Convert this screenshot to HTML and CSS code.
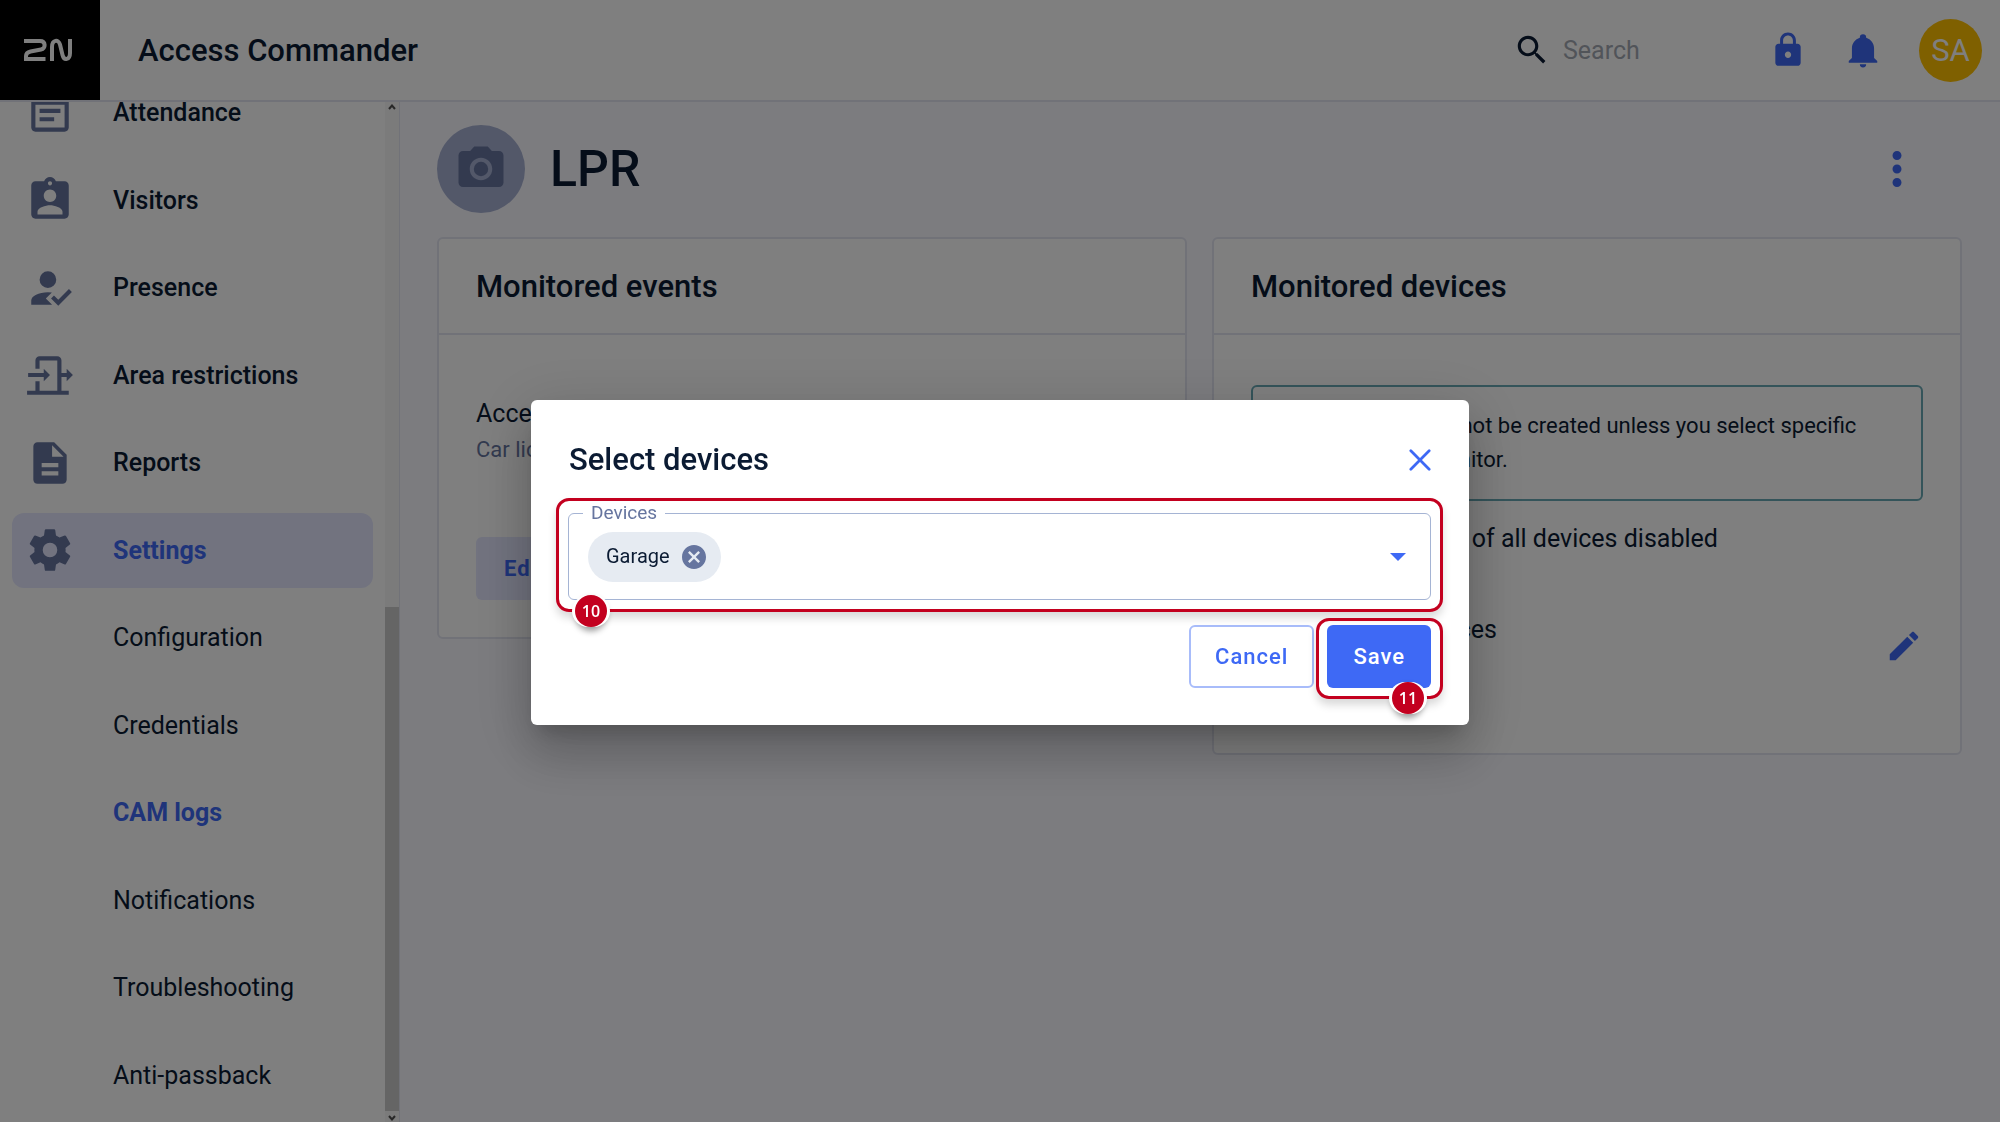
FILE: index.html
```html
<!DOCTYPE html>
<html lang="en">
<head>
<meta charset="utf-8">
<meta name="viewport" content="width=device-width, initial-scale=1">
<title>Access Commander</title>
<link rel="stylesheet" href="styles.css">
</head>
<body>
<div class="app">
  <header class="topbar">
    <a class="brand" href="#" aria-label="2N">
      <svg class="brand-logo" viewBox="0 0 48 24" aria-hidden="true"><path d="M0 3H16C22 3 22 10.500 17 11.500L6.500 13.500Q2 14.500 2 18V21H21.500" /><path d="M28 23V9C28 1.500 34.500 1 36 6.500L38.500 17C40 23 46 22 46 15V1" /></svg>
    </a>
    <span class="product">Access Commander</span>
    <div class="tools">
      <label class="search">
        <svg viewBox="0 0 24 24" aria-hidden="true"><path d="M15.500 14h-.79l-.28-.27C15.410 12.590 16 11.110 16 9.500 16 5.910 13.090 3 9.500 3S3 5.910 3 9.500 5.910 16 9.500 16c1.610 0 3.090-.59 4.230-1.570l.27.28v.79l5 4.990L20.490 19l-4.990-5zm-6 0C7.010 14 5 11.990 5 9.500S7.010 5 9.500 5 14 7.010 14 9.500 11.990 14 9.500 14z"/></svg>
        <input type="search" placeholder="Search" aria-label="Search">
      </label>
      <button class="tool" aria-label="Lock">
        <svg viewBox="0 0 24 24" aria-hidden="true"><path d="M18 8h-1V6c0-2.760-2.240-5-5-5S7 3.240 7 6v2H6c-1.100 0-2 .9-2 2v10c0 1.100.9 2 2 2h12c1.100 0 2-.9 2-2V10c0-1.100-.9-2-2-2zm-6 9c-1.100 0-2-.9-2-2s.9-2 2-2 2 .9 2 2-.9 2-2 2zm3.100-9H8.900V6c0-1.710 1.390-3.100 3.100-3.100s3.100 1.390 3.100 3.100v2z"/></svg>
      </button>
      <button class="tool" aria-label="Notifications">
        <svg viewBox="0 0 24 24" aria-hidden="true"><path d="M21 19V20H3V19L5 17V11C5 7.900 7.030 5.170 10 4.290V4A2 2 0 0 1 14 4V4.290C16.970 5.170 19 7.900 19 11V17L21 19M14 21A2 2 0 0 1 10 21"/></svg>
      </button>
      <button class="user">SA</button>
    </div>
  </header>

  <div class="body">
    <aside class="sidebar">
      <nav class="nav">
        <a class="item" href="#"><svg viewBox="0 0 24 24" aria-hidden="true"><path d="M17 10H7v2h10v-2zm2-7h-1V1h-2v2H8V1H6v2H5c-1.110 0-1.990.9-1.990 2L3 19c0 1.100.89 2 2 2h14c1.100 0 2-.9 2-2V5c0-1.100-.9-2-2-2zm0 16H5V8h14v11zm-5-5H7v2h7v-2z"/></svg>Attendance</a>
        <a class="item" href="#"><svg viewBox="0 0 24 24" aria-hidden="true"><path d="M19 3h-4.180C14.400 1.840 13.300 1 12 1c-1.300 0-2.400.84-2.820 2H5c-1.100 0-2 .9-2 2v14c0 1.100.9 2 2 2h14c1.100 0 2-.9 2-2V5c0-1.100-.9-2-2-2zm-7 0c.55 0 1 .45 1 1s-.45 1-1 1-1-.45-1-1 .45-1 1-1zm0 4c1.660 0 3 1.340 3 3s-1.340 3-3 3-3-1.340-3-3 1.340-3 3-3zm6 12H6v-1.400c0-2 4-3.100 6-3.100s6 1.100 6 3.100V19z"/></svg>Visitors</a>
        <a class="item" href="#"><svg viewBox="0 0 24 24" aria-hidden="true"><path d="M21.100 12.500L22.500 13.910L15.970 20.500L12.500 17L13.900 15.590L15.970 17.670L21.100 12.500M11 4A4 4 0 1 1 11 12A4 4 0 0 1 11 4M10 17L13 20H3V18C3 15.790 6.580 14 11 14L12.890 14.110L10 17Z"/></svg>Presence</a>
        <a class="item" href="#"><svg viewBox="0 0 24 24" aria-hidden="true"><path d="M1 19.500h4V15h2v4.500h8.500V5H7v4H5V5a2 2 0 0 1 2-2h8.500a2 2 0 0 1 2 2v6H20V9l3 3-3 3v-2h-2.500v6.500H21v2H1zM1.500 11H9V9l3 3-3 3v-2H1.500z"/></svg>Area restrictions</a>
        <a class="item" href="#"><svg viewBox="0 0 24 24" aria-hidden="true"><path d="M14 2H6c-1.100 0-1.990.9-1.990 2L4 20c0 1.100.89 2 1.990 2H18c1.100 0 2-.9 2-2V8l-6-6zm2 16H8v-2h8v2zm0-4H8v-2h8v2zm-3-5V3.500L18.500 9H13z"/></svg>Reports</a>
        <a class="item current" href="#"><svg viewBox="0 0 24 24" aria-hidden="true"><path d="M12 15.500A3.500 3.500 0 0 1 8.500 12 3.500 3.500 0 0 1 12 8.500a3.500 3.500 0 0 1 3.500 3.500 3.500 3.500 0 0 1-3.500 3.500m7.430-2.530c.04-.32.07-.64.07-.97s-.03-.66-.07-1l2.110-1.630c.19-.15.24-.42.12-.64l-2-3.460c-.12-.22-.39-.31-.61-.22l-2.490 1c-.52-.39-1.060-.73-1.690-.98l-.37-2.650A.506.506 0 0 0 14 2h-4c-.25 0-.46.18-.5.420l-.37 2.650c-.63.250-1.170.590-1.690.980l-2.490-1c-.22-.09-.49 0-.61.220l-2 3.460c-.13.220-.07.490.12.640L4.570 11c-.04.340-.07.670-.07 1s.03.650.07.970l-2.110 1.660c-.19.150-.25.420-.12.640l2 3.460c.12.220.39.300.61.220l2.490-1.010c.52.400 1.060.740 1.690.990l.37 2.650c.04.240.25.420.5.420h4c.25 0 .46-.18.5-.42l.37-2.650c.63-.26 1.170-.59 1.690-.99l2.490 1.010c.22.080.49 0 .61-.22l2-3.460c.12-.22.070-.49-.12-.64z"/></svg>Settings</a>
        <a class="item sub" href="#">Configuration</a>
        <a class="item sub" href="#">Credentials</a>
        <a class="item sub active" href="#">CAM logs</a>
        <a class="item sub" href="#">Notifications</a>
        <a class="item sub" href="#">Troubleshooting</a>
        <a class="item sub" href="#">Anti-passback</a>
      </nav>
      <div class="scrollbar" aria-hidden="true">
        <svg viewBox="0 0 8 6"><path d="M1 5L4 1.500L7 5"/></svg>
        <div class="thumb"></div>
        <svg viewBox="0 0 8 6"><path d="M1 1L4 4.500L7 1"/></svg>
      </div>
    </aside>

    <main class="main">
      <div class="page-head">
        <span class="avatar"><svg viewBox="0 0 24 24" aria-hidden="true"><path d="M9 2L7.170 4H4c-1.100 0-2 .9-2 2v12c0 1.100.9 2 2 2h16c1.100 0 2-.9 2-2V6c0-1.100-.9-2-2-2h-3.170L15 2H9zm3 15c-2.760 0-5-2.240-5-5s2.240-5 5-5 5 2.240 5 5-2.240 5-5 5z"/><circle cx="12" cy="12" r="3.200"/></svg></span>
        <h1>LPR</h1>
        <button class="more" aria-label="More"><svg viewBox="0 0 24 24" aria-hidden="true"><path d="M12 8c1.100 0 2-.9 2-2s-.9-2-2-2-2 .9-2 2 .9 2 2 2zm0 2c-1.100 0-2 .9-2 2s.9 2 2 2 2-.9 2-2-.9-2-2-2zm0 6c-1.100 0-2 .9-2 2s.9 2 2 2 2-.9 2-2-.9-2-2-2z"/></svg></button>
      </div>
      <div class="cards">
        <section class="card">
          <h2>Monitored events</h2>
          <div class="events">
            <p>Access</p>
            <p class="secondary">Car license plate</p>
            <button class="edit">Edit</button>
          </div>
        </section>
        <section class="card">
          <h2>Monitored devices</h2>
          <div class="devices">
            <div class="alert">
              <svg viewBox="0 0 24 24" aria-hidden="true"><path d="M11 7h2v2h-2zm0 4h2v6h-2zm1-9a10 10 0 1 0 0 20 10 10 0 0 0 0-20zm0 18a8 8 0 1 1 0-16 8 8 0 0 1 0 16z"/></svg>
              <p>CAM logs will not be created unless you select specific<br>devices to monitor.</p>
            </div>
            <label class="all"><input type="checkbox" role="switch">Monitoring of all devices disabled</label>
            <div class="choice">
              <div>
                <p>No connected devices</p>
                <p>None</p>
              </div>
              <button class="pencil" aria-label="Edit devices"><svg viewBox="0 0 24 24" aria-hidden="true"><path d="M3 17.250V21h3.750L17.810 9.940l-3.750-3.750L3 17.250zM20.710 7.040c.39-.39.39-1.020 0-1.410l-2.340-2.340c-.39-.39-1.020-.39-1.410 0l-1.830 1.830 3.750 3.750 1.830-1.830z"/></svg></button>
            </div>
          </div>
        </section>
      </div>
    </main>
  </div>
</div>

<div class="backdrop">
  <div class="dialog" role="dialog" aria-modal="true" aria-labelledby="dialog-title">
    <div class="dialog-head">
      <h2 id="dialog-title">Select devices</h2>
      <button class="close" aria-label="Close"><svg viewBox="0 0 24 24" aria-hidden="true"><path d="M2 2L22 22M22 2L2 22"/></svg></button>
    </div>
    <div class="callout callout-field">
      <fieldset class="field">
        <legend>Devices</legend>
        <span class="chip">Garage
          <button class="remove" aria-label="Remove Garage"><svg viewBox="0 0 24 24" aria-hidden="true"><path d="M12 0C5.400 0 0 5.400 0 12s5.400 12 12 12 12-5.400 12-12S18.600 0 12 0zm6 16.300L16.300 18 12 13.700 7.700 18 6 16.300 10.300 12 6 7.700 7.700 6 12 10.300 16.300 6 18 7.700 13.700 12z"/></svg></button>
        </span>
        <button class="arrow" aria-label="Open"><svg viewBox="0 0 16 8" aria-hidden="true"><path d="M0 0H16L8 8Z"/></svg></button>
      </fieldset>
      <span class="badge badge-left">10</span>
    </div>
    <div class="actions">
      <button class="btn cancel">Cancel</button>
      <div class="callout callout-save">
        <button class="btn save">Save</button>
        <span class="badge badge-right">11</span>
      </div>
    </div>
  </div>
</div>
</body>
</html>
```
FILE: styles.css
```css
* { box-sizing: border-box; margin: 0; }

:root {
  --ink: #0b1b33;
  --blue: #3e69f5;
  --slate: #66759f;
  --line: #e2e4f0;
  --red: #c3001f;
}

body {
  font: 25px/33px Roboto, "Liberation Sans", sans-serif;
  color: var(--ink);
  background: #f8f8ff;
}
button { font: inherit; color: inherit; border: 0; padding: 0; background: none; }
a { color: inherit; text-decoration: none; }
svg { display: block; fill: currentColor; }

.app { display: flex; flex-direction: column; height: 100vh; }

.topbar {
  flex: none;
  display: flex;
  align-items: center;
  background: #fff;
  border-bottom: 2px solid var(--line);
}
.brand {
  display: grid;
  place-items: center;
  width: 100px;
  height: 100px;
  padding-right: 5px;
  background: #000;
  color: #fff;
}
.brand-logo { width: 48px; fill: none; stroke: currentColor; stroke-width: 4; }
.product { margin-left: 38px; font-size: 31px; font-weight: 500; }
.tools { display: flex; align-items: center; margin-left: auto; padding-right: 18px; }
.search { display: flex; align-items: center; gap: 12px; margin-right: 32px; }
.search svg { width: 38px; }
.search input {
  width: 155px;
  border: 0;
  padding: 0;
  font: inherit;
  background: none;
}
.search input::placeholder { color: #a3a8b3; opacity: 1; }
.tool { display: grid; place-items: center; width: 75px; color: var(--blue); }
.tool svg { width: 38px; }
.user {
  width: 63px;
  height: 63px;
  margin-left: 19px;
  border-radius: 50%;
  background: #ffc000;
  color: #fff;
  font-size: 31px;
}

.body { flex: 1; display: flex; min-height: 0; }
.sidebar {
  flex: none;
  display: flex;
  width: 400px;
  overflow: hidden;
  background: #fff;
  border-right: 1px solid var(--line);
}
.nav {
  flex: 1;
  display: grid;
  grid-auto-rows: 87px 88px;
  align-content: start;
  align-items: center;
  margin-top: -33px;
  padding: 0 12px;
}
.item {
  display: flex;
  align-items: center;
  gap: 38px;
  height: 75px;
  padding-left: 13px;
  border-radius: 12px;
  font-weight: 500;
}
.item svg { width: 50px; color: var(--slate); }
.current { background: #e4e7ff; color: var(--blue); font-weight: 700; }
.sub { padding-left: 101px; font-weight: 400; }
.active { color: var(--blue); font-weight: 700; }
.scrollbar {
  display: flex;
  flex-direction: column;
  justify-content: space-between;
  align-items: center;
  width: 14px;
  padding: 2px 0 1px;
  background: #f6f6f6;
}
.scrollbar svg { width: 8px; fill: none; stroke: #505050; stroke-width: 2; }
.thumb { width: 14px; height: calc(50% - 4px); margin-top: auto; margin-bottom: 4px; background: #cbcbcb; }

.main { flex: 1; padding: 23px 38px 23px 37px; }
.page-head { display: flex; align-items: center; margin-bottom: 24px; }
.avatar {
  display: grid;
  place-items: center;
  width: 88px;
  height: 88px;
  border-radius: 50%;
  background: #a6b0d2;
  color: var(--slate);
}
.avatar svg { width: 54px; }
h1 { margin-left: 25px; font-size: 50px; line-height: 60px; font-weight: 500; }
.more { margin-left: auto; margin-right: 38px; color: var(--blue); }
.more svg { width: 54px; }

.cards { display: grid; grid-template-columns: 1fr 1fr; gap: 25px; align-items: start; }
.card { background: #fff; border: 2px solid var(--line); border-radius: 6px; }
.card h2 {
  padding: 28px 37px 26px;
  border-bottom: 2px solid var(--line);
  font-size: 31px;
  line-height: 40px;
  font-weight: 500;
}
.events { padding: 62px 37px 37px; }
.secondary { margin: 3px 0 71px; font-size: 22px; color: var(--slate); }
.edit {
  height: 63px;
  padding: 0 28px;
  border-radius: 6px;
  background: #e4e7ff;
  color: var(--blue);
  font-size: 22px;
  font-weight: 700;
  letter-spacing: 1px;
}
.devices { padding: 50px 37px 74px; }
.alert {
  display: flex;
  gap: 17px;
  padding: 22px 20px;
  border: 2px solid #68a8b4;
  border-radius: 6px;
  font-size: 22px;
  line-height: 34px;
}
.alert svg { flex: none; width: 32px; height: 32px; color: #68a8b4; }
.all { display: flex; align-items: center; gap: 22px; margin: 21px 0 58px; }
.all input {
  appearance: none;
  width: 72px;
  height: 32px;
  margin: 0;
  border-radius: 16px;
  background: #a6b0d2;
}
.choice { display: flex; align-items: center; justify-content: space-between; }
.pencil { color: var(--blue); }
.pencil svg { width: 38px; }

.backdrop {
  position: fixed;
  inset: 0;
  display: grid;
  place-items: center;
  padding-top: 3px;
  background: rgb(0 0 0 / 50%);
}
.dialog {
  width: 938px;
  padding: 38px 26px 26px 25px;
  border-radius: 6px;
  background: #fff;
  box-shadow: 0 14px 19px -9px rgb(0 0 0 / 20%), 0 30px 48px 4px rgb(0 0 0 / 14%), 0 12px 58px 10px rgb(0 0 0 / 12%);
}
.dialog-head {
  display: flex;
  align-items: center;
  justify-content: space-between;
  margin: 0 12px 17px 13px;
}
.dialog-head h2 { font-size: 31px; line-height: 43px; font-weight: 500; }
.close svg { width: 22px; fill: none; stroke: var(--blue); stroke-width: 3; stroke-linecap: round; }

.callout {
  position: relative;
  border: 3px solid var(--red);
  border-radius: 13px;
  box-shadow: 0 6px 8px rgb(0 0 0 / 15%);
}
.callout-field { padding: 1px 9px 9px; }
.field {
  display: flex;
  align-items: center;
  justify-content: space-between;
  min-width: 0;
  height: 98px;
  padding: 0 24px 10px 19px;
  border: 1px solid #a5b4d4;
  border-radius: 6px;
}
.field legend { padding: 0 8px; margin-left: -5px; font-size: 19px; line-height: 22px; color: var(--slate); }
.chip {
  display: flex;
  align-items: center;
  gap: 12px;
  height: 50px;
  padding: 0 15px 0 18px;
  border-radius: 25px;
  background: #e6ebf2;
  font-size: 20px;
}
.remove { color: var(--slate); }
.remove svg { width: 24px; }
.arrow svg { width: 16px; color: var(--blue); }

.badge {
  position: absolute;
  bottom: -18px;
  display: grid;
  place-items: center;
  width: 32px;
  height: 32px;
  border-radius: 50%;
  background: var(--red);
  box-shadow: -3px 0 #fff, 3px 0 #fff, 0 4px 6px rgb(0 0 0 / 40%);
  color: #fff;
  font: 600 16px/20px "Open Sans", sans-serif;
}
.badge-left { left: 16px; }
.badge-right { right: 16px; }

.actions { display: flex; justify-content: flex-end; align-items: flex-start; gap: 2px; margin-top: 6px; }
.btn { height: 63px; border-radius: 6px; font-size: 22px; font-weight: 500; letter-spacing: 1px; }
.cancel { margin-top: 7px; padding: 0 24px; border: 2px solid #a8bcfa; color: var(--blue); }
.callout-save { padding: 4px 9px 8px 8px; }
.save { display: block; padding: 0 26px; background: var(--blue); color: #fff; }
```
